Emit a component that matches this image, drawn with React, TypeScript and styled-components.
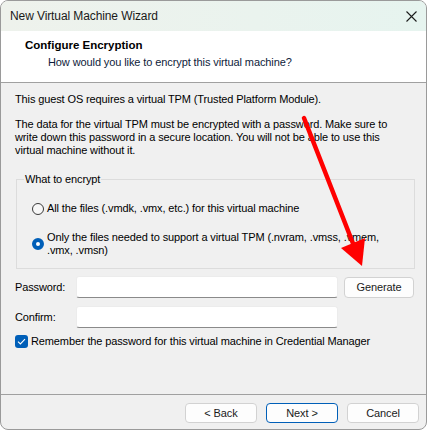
import styled, { createGlobalStyle } from "styled-components";

const GlobalStyle = createGlobalStyle`
  html, body {
    margin: 0;
    padding: 0;
    background: #ffffff;
  }
  body {
    font-family: "Liberation Sans", Arial, sans-serif;
    color: #000000;
  }
`;

export default function App() {
  return (
    <>
      <GlobalStyle />
      <Page>
        <Window>
          <TitleBar>
            <WindowTitle>New Virtual Machine Wizard</WindowTitle>
            <CloseButton aria-label="Close">
              <svg width="11" height="11" viewBox="0 0 11 11">
                <path
                  d="M0.5 0.5 L10.5 10.5 M10.5 0.5 L0.5 10.5"
                  stroke="#1c1c1c"
                  strokeWidth="1.1"
                  fill="none"
                />
              </svg>
            </CloseButton>
          </TitleBar>

          <Header>
            <PageTitle>Configure Encryption</PageTitle>
            <PageSubtitle>
              How would you like to encrypt this virtual machine?
            </PageSubtitle>
          </Header>

          <Content>
            <Paragraph>
              This guest OS requires a virtual TPM (Trusted Platform Module).
            </Paragraph>
            <Paragraph $gap={12}>
              The data for the virtual TPM must be encrypted with a password.
              Make sure to
              <br />
              write down this password in a secure location. You will not be
              able to use this
              <br />
              virtual machine without it.
            </Paragraph>

            <GroupBox>
              <GroupTitle>What to encrypt</GroupTitle>
              <RadioRow>
                <Radio $checked={false} />
                <RadioLabel>
                  All the files (.vmdk, .vmx, etc.) for this virtual machine
                </RadioLabel>
              </RadioRow>
              <RadioRow>
                <Radio $checked />
                <RadioLabel>
                  Only the files needed to support a virtual TPM (.nvram,
                  .vmss, .vmem,
                  <br />
                  .vmx, .vmsn)
                </RadioLabel>
              </RadioRow>
            </GroupBox>

            <FieldRow $gap={7}>
              <FieldLabel>Password:</FieldLabel>
              <TextBox type="password" />
              <DialogButton $width={70} $height={21}>
                Generate
              </DialogButton>
            </FieldRow>
            <FieldRow $gap={8}>
              <FieldLabel>Confirm:</FieldLabel>
              <TextBox type="password" />
            </FieldRow>

            <CheckRow>
              <CheckBox>
                <svg width="9" height="7" viewBox="0 0 9 7">
                  <path
                    d="M1 3.6 L3.4 6 L8 1.2"
                    stroke="#ffffff"
                    strokeWidth="1.1"
                    fill="none"
                  />
                </svg>
              </CheckBox>
              <CheckLabel>
                Remember the password for this virtual machine in Credential
                Manager
              </CheckLabel>
            </CheckRow>
          </Content>

          <Footer>
            <DialogButton>&lt; Back</DialogButton>
            <DialogButton $primary>Next &gt;</DialogButton>
            <DialogButton>Cancel</DialogButton>
          </Footer>
        </Window>

        {/* red callout arrow pointing at the Generate button */}
        <Callout width="428" height="430" viewBox="0 0 428 430">
          <line
            x1="304"
            y1="118"
            x2="354"
            y2="246"
            stroke="#ff0000"
            strokeWidth="4.5"
            strokeLinecap="round"
          />
          <polygon points="341,248 365,238 362,266" fill="#ff0000" />
        </Callout>
      </Page>
    </>
  );
}

const Page = styled.div`
  position: relative;
  width: 428px;
  height: 430px;
  overflow: hidden;
`;

const Window = styled.div`
  box-sizing: border-box;
  width: 427px;
  height: 430px;
  display: flex;
  flex-direction: column;
  border: 1px solid #9a9a9a;
  border-radius: 8px;
  overflow: hidden;
  background: #f0f0f0;
`;

const TitleBar = styled.div`
  height: 30px;
  display: flex;
  align-items: center;
  justify-content: space-between;
  padding-left: 9px;
  background: linear-gradient(90deg, #eef2ec 0%, #eaf3ee 60%, #e6f4ef 100%);
`;

const WindowTitle = styled.div`
  font-size: 12px;
  color: #1a1a1a;
  letter-spacing: -0.1px;
`;

const CloseButton = styled.div`
  width: 30px;
  height: 30px;
  display: flex;
  align-items: center;
  justify-content: center;
`;

const Header = styled.div`
  height: 52px;
  box-sizing: border-box;
  padding: 6px 0 0 24px;
  background: #ffffff;
  border-bottom: 1px solid #a0a0a0;
`;

const PageTitle = styled.div`
  font-size: 11.5px;
  font-weight: bold;
  line-height: 16px;
  color: #000000;
`;

const PageSubtitle = styled.div`
  margin-top: 1px;
  padding-left: 23px;
  font-size: 11px;
  line-height: 16px;
  letter-spacing: -0.1px;
  color: #0e1b3a;
`;

const Content = styled.div`
  flex: 1;
  padding: 10px 0 0 14px;
`;

const Paragraph = styled.div<{ $gap?: number }>`
  margin-top: ${(p) => p.$gap ?? 0}px;
  font-size: 11px;
  line-height: 13px;
  letter-spacing: -0.12px;
  color: #000000;
`;

const GroupBox = styled.fieldset`
  box-sizing: border-box;
  width: 399px;
  margin: 16px 0 0 1px;
  padding: 0 0 11px 0;
  border: 1px solid #dcdcdc;
  border-radius: 0;
`;

const GroupTitle = styled.legend`
  margin-left: 7px;
  padding: 0 1px;
  font-size: 11px;
  line-height: 13px;
  letter-spacing: -0.12px;
  color: #000000;
`;

const RadioRow = styled.div`
  display: flex;
  align-items: center;
  gap: 3px;
  margin-top: 16px;
  padding-left: 15px;
`;

const Radio = styled.span<{ $checked: boolean }>`
  box-sizing: border-box;
  flex: none;
  width: 12px;
  height: 12px;
  border-radius: 50%;
  border: ${(p) => (p.$checked ? "4px solid #005fb8" : "1px solid #3a3a3a")};
  background: ${(p) => (p.$checked ? "#ffffff" : "#f7f7f7")};
`;

const RadioLabel = styled.div`
  font-size: 11px;
  line-height: 13px;
  letter-spacing: -0.12px;
`;

const FieldRow = styled.div<{ $gap: number }>`
  display: flex;
  align-items: center;
  margin-top: ${(p) => p.$gap}px;
`;

const FieldLabel = styled.div`
  width: 61px;
  font-size: 11px;
  letter-spacing: -0.12px;
`;

const TextBox = styled.input`
  box-sizing: border-box;
  width: 262px;
  height: 22px;
  margin: 0 6px 0 0;
  padding: 0 4px;
  background: #ffffff;
  border: 1px solid #ececec;
  border-bottom: 1px solid #8a8a8a;
  border-radius: 3px;
  outline: none;
`;

const DialogButton = styled.div<{
  $primary?: boolean;
  $width?: number;
  $height?: number;
}>`
  box-sizing: border-box;
  width: ${(p) => p.$width ?? 72}px;
  height: ${(p) => p.$height ?? 20}px;
  display: flex;
  align-items: center;
  justify-content: center;
  font-size: 11px;
  letter-spacing: -0.1px;
  color: #1a1a1a;
  background: #fdfdfd;
  border: 1px solid ${(p) => (p.$primary ? "#005fb8" : "#d2d2d2")};
  border-radius: 4px;
`;

const CheckRow = styled.div`
  display: flex;
  align-items: center;
  gap: 3px;
  margin-top: 7px;
`;

const CheckBox = styled.span`
  flex: none;
  width: 13px;
  height: 13px;
  border-radius: 3px;
  background: #005fb8;
  display: flex;
  align-items: center;
  justify-content: center;
`;

const CheckLabel = styled.div`
  font-size: 11px;
  line-height: 13px;
  letter-spacing: -0.12px;
`;

const Footer = styled.div`
  height: 35px;
  box-sizing: border-box;
  display: flex;
  justify-content: flex-end;
  gap: 9px;
  padding: 8px 7px 0 0;
  border-top: 1px solid #a0a0a0;
`;

const Callout = styled.svg`
  position: absolute;
  top: 0;
  left: 0;
  pointer-events: none;
`;
